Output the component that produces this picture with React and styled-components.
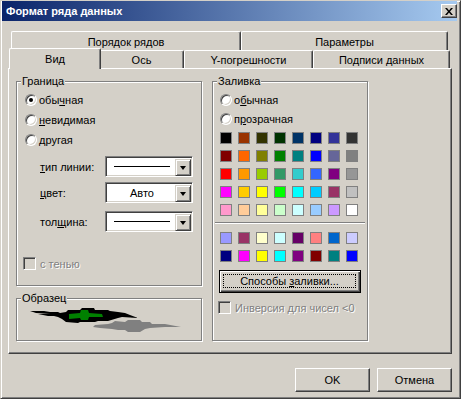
import React from "react";
import styled, { createGlobalStyle } from "styled-components";

const GlobalStyle = createGlobalStyle`
  html, body {
    margin: 0;
    padding: 0;
    background: #d4d0c8;
  }
  body {
    font-family: "Liberation Sans", Arial, sans-serif;
    font-size: 11px;
    color: #000;
  }
`;

const basePalette = [
  ["#000000", "#993300", "#333300", "#003300", "#003366", "#000080", "#333399", "#333333"],
  ["#800000", "#ff6600", "#808000", "#008000", "#008080", "#0000ff", "#666699", "#808080"],
  ["#ff0000", "#ff9900", "#99cc00", "#339966", "#33cccc", "#3366ff", "#800080", "#969696"],
  ["#ff00ff", "#ffcc00", "#ffff00", "#00ff00", "#00ffff", "#00ccff", "#993366", "#c0c0c0"],
  ["#ff99cc", "#ffcc99", "#ffff99", "#ccffcc", "#ccffff", "#99ccff", "#cc99ff", "#ffffff"],
];

const chartPalette = [
  ["#9999ff", "#993366", "#ffffcc", "#ccffff", "#660066", "#ff8080", "#0066cc", "#ccccff"],
  ["#000080", "#ff00ff", "#ffff00", "#00ffff", "#800080", "#800000", "#008080", "#0000ff"],
];

const Window = styled.div`
  width: 461px;
  height: 399px;
  box-sizing: border-box;
  background: #d4d0c8;
  border: 1px solid;
  border-color: #d4d0c8 #404040 #404040 #d4d0c8;
  box-shadow: inset 1px 1px #fff, inset -1px -1px #808080;
  padding: 0 3px 1px 1px;
`;

const TitleBar = styled.div`
  height: 20px;
  display: flex;
  align-items: center;
  justify-content: space-between;
  padding-left: 4px;
  background: linear-gradient(to right, #0a246a, #a6caf0);
  color: #fff;
  font-weight: bold;
  font-size: 11px;
`;

const CloseButton = styled.div`
  width: 16px;
  height: 14px;
  box-sizing: border-box;
  background: #d4d0c8;
  border: 1px solid;
  border-color: #fff #404040 #404040 #fff;
  box-shadow: inset -1px -1px #808080;
  display: flex;
  align-items: center;
  justify-content: center;
`;

const Body = styled.div`
  padding: 10px 5px 0 6px;
`;

const TabStrip = styled.div`
  height: 37px;
  display: flex;
  flex-direction: column;
`;

const TabRow = styled.div`
  height: ${(p) => p.$h}px;
  display: flex;
  padding-left: 3px;
  align-items: flex-end;
`;

const Tab = styled.div`
  box-sizing: border-box;
  width: ${(p) => (p.$active ? p.$w + 4 : p.$w)}px;
  height: ${(p) => (p.$active ? 21 : p.$h)}px;
  margin: ${(p) => (p.$active ? "0 -2px -1px -2px" : "0")};
  position: relative;
  z-index: ${(p) => (p.$active ? 2 : 0)};
  align-self: flex-start;
  display: flex;
  align-items: center;
  justify-content: center;
  padding-top: ${(p) => (p.$active ? 0 : 1)}px;
  background: #d4d0c8;
  border-top: 1px solid #fff;
  border-left: 1px solid #fff;
  border-right: 1px solid #404040;
  box-shadow: inset -1px 0 #808080;
  border-radius: 2px 2px 0 0;
  margin-top: ${(p) => (p.$active ? 0 : p.$top)}px;
`;

const Panel = styled.div`
  box-sizing: border-box;
  width: 444px;
  height: 286px;
  border: 1px solid;
  border-color: #fff #404040 #404040 #fff;
  box-shadow: inset -1px -1px #808080;
  padding: 12px 0 0 7px;
  display: flex;
  gap: 10px;
`;

const Column = styled.div`
  display: flex;
  flex-direction: column;
  gap: 12px;
`;

const Group = styled.div`
  position: relative;
  box-sizing: border-box;
  width: ${(p) => p.$w}px;
  height: ${(p) => p.$h}px;
  border: 1px solid #808080;
  box-shadow: inset 1px 1px #fff, 1px 1px #fff;
  padding: ${(p) => p.$pad || "8px 0 0 8px"};
`;

const Legend = styled.span`
  position: absolute;
  top: -7px;
  left: 4px;
  padding: 0 1px;
  line-height: 13px;
  background: #d4d0c8;
`;

const OptionRow = styled.div`
  height: ${(p) => p.$h || 20}px;
  display: flex;
  align-items: center;
`;

const Radio = styled.span`
  box-sizing: border-box;
  width: 12px;
  height: 12px;
  border-radius: 50%;
  border: 1px solid;
  border-color: #808080 #fff #fff #808080;
  box-shadow: inset 1px 1px #404040, inset -1px -1px #d4d0c8;
  background: #fff;
  margin-right: 2px;
  display: flex;
  align-items: center;
  justify-content: center;

  &::after {
    content: "";
    width: 4px;
    height: 4px;
    border-radius: 50%;
    background: ${(p) => (p.$checked ? "#000" : "transparent")};
  }
`;

const CheckRow = styled.div`
  display: flex;
  align-items: center;
  height: 13px;
  margin: ${(p) => p.$m};
  color: #808080;
  text-shadow: 1px 1px 0 #fff;
`;

const CheckBox = styled.span`
  box-sizing: border-box;
  width: 13px;
  height: 13px;
  border: 1px solid;
  border-color: #808080 #fff #fff #808080;
  box-shadow: inset 1px 1px #404040, inset -1px -1px #d4d0c8;
  background: #d4d0c8;
  margin-right: 4px;
`;

const FieldRow = styled.div`
  display: flex;
  align-items: center;
  height: 21px;
  margin-top: ${(p) => p.$mt}px;
  padding-left: 15px;
`;

const FieldLabel = styled.span`
  width: 65px;
`;

const Combo = styled.div`
  box-sizing: border-box;
  width: 88px;
  height: 21px;
  border: 1px solid;
  border-color: #808080 #fff #fff #808080;
  box-shadow: inset 1px 1px #404040, inset -1px -1px #d4d0c8;
  background: #fff;
  padding: 2px;
  display: flex;
`;

const ComboValue = styled.div`
  flex: 1;
  display: flex;
  align-items: center;
  justify-content: center;
  padding: 0 5px 0 6px;
`;

const LineSample = styled.div`
  flex: 1;
  height: 1px;
  background: #000;
`;

const ArrowButton = styled.div`
  box-sizing: border-box;
  width: 16px;
  height: 17px;
  margin-right: -1px;
  background: #d4d0c8;
  border: 1px solid;
  border-color: #d4d0c8 #404040 #404040 #d4d0c8;
  box-shadow: inset 1px 1px #fff, inset -1px -1px #808080;
  display: flex;
  align-items: center;
  justify-content: center;

  &::after {
    content: "";
    border-left: 3.5px solid transparent;
    border-right: 3.5px solid transparent;
    border-top: 4px solid #000;
    margin-top: 1px;
  }
`;

const SampleArt = styled.svg`
  display: block;
  position: absolute;
  left: 0;
  top: 0;
`;

const Swatches = styled.div`
  display: grid;
  grid-template-columns: repeat(8, 12px);
  gap: 6px;
  margin-top: ${(p) => p.$mt}px;
`;

const Swatch = styled.span`
  box-sizing: border-box;
  width: 12px;
  height: 12px;
  border: 1px solid #808080;
  background: ${(p) => p.$c};
`;

const Separator = styled.div`
  height: 0;
  border-top: 1px solid #808080;
  border-bottom: 1px solid #fff;
  margin: 6px -5px 8px -5px;
`;

const DefaultButton = styled.div`
  box-sizing: border-box;
  width: 142px;
  height: 23px;
  margin: 8px 0 0 -1px;
  border: 1px solid #000;
  box-shadow: inset 1px 1px #fff, inset -1px -1px #404040, inset -2px -2px #808080;
  padding: 3px 4px 4px 3px;
  display: flex;
`;

const FocusRect = styled.span`
  flex: 1;
  border: 1px dotted #000;
  display: flex;
  align-items: center;
  justify-content: center;
`;

const ButtonRow = styled.div`
  display: flex;
  justify-content: flex-end;
  gap: 7px;
  margin-top: 14px;
`;

const Button = styled.div`
  box-sizing: border-box;
  width: 75px;
  height: 24px;
  border: 1px solid;
  border-color: #fff #404040 #404040 #fff;
  box-shadow: inset -1px -1px #808080;
  display: flex;
  align-items: center;
  justify-content: center;
`;

const frontTabs = [
  { label: "Вид", w: 88, active: true },
  { label: "Ось", w: 85 },
  { label: "Y-погрешности", w: 129 },
  { label: "Подписи данных", w: 137 },
];

const backTabs = [
  { label: "Порядок рядов", w: 230 },
  { label: "Параметры", w: 207 },
];

function SwatchGrid({ rows, mt }) {
  return (
    <Swatches $mt={mt}>
      {rows.flat().map((c, i) => (
        <Swatch key={i} $c={c} />
      ))}
    </Swatches>
  );
}

export default function App() {
  return (
    <>
      <GlobalStyle />
      <Window>
        <TitleBar>
          <span>Формат ряда данных</span>
          <CloseButton>
            <svg width="8" height="7" viewBox="0 0 8 7">
              <path d="M0 0h2l2 2.5L6 0h2L5 3.5 8 7H6L4 4.5 2 7H0l3-3.5z" fill="#000" />
            </svg>
          </CloseButton>
        </TitleBar>
        <Body>
          <TabStrip>
            <TabRow $h={17}>
              {backTabs.map((t) => (
                <Tab key={t.label} $w={t.w} $h={19} $top={0}>
                  {t.label}
                </Tab>
              ))}
            </TabRow>
            <TabRow $h={20}>
              {frontTabs.map((t) => (
                <Tab key={t.label} $w={t.w} $h={18} $top={2} $active={t.active}>
                  {t.label}
                </Tab>
              ))}
            </TabRow>
          </TabStrip>
          <Panel>
            <Column>
              <Group $w={186} $h={205}>
                <Legend>Граница</Legend>
                <OptionRow>
                  <Radio $checked />
                  <span>
                    обы<u>ч</u>ная
                  </span>
                </OptionRow>
                <OptionRow>
                  <Radio />
                  <span>
                    <u>н</u>евидимая
                  </span>
                </OptionRow>
                <OptionRow>
                  <Radio />
                  <span>другая</span>
                </OptionRow>
                <FieldRow $mt={6}>
                  <FieldLabel>
                    <u>т</u>ип линии:
                  </FieldLabel>
                  <Combo>
                    <ComboValue>
                      <LineSample />
                    </ComboValue>
                    <ArrowButton />
                  </Combo>
                </FieldRow>
                <FieldRow $mt={5}>
                  <FieldLabel>
                    <u>ц</u>вет:
                  </FieldLabel>
                  <Combo>
                    <ComboValue>Авто</ComboValue>
                    <ArrowButton />
                  </Combo>
                </FieldRow>
                <FieldRow $mt={8}>
                  <FieldLabel>
                    тол<u>щ</u>ина:
                  </FieldLabel>
                  <Combo>
                    <ComboValue>
                      <LineSample />
                    </ComboValue>
                    <ArrowButton />
                  </Combo>
                </FieldRow>
                <CheckRow $m="25px 0 0 -2px">
                  <CheckBox />
                  <span>с тенью</span>
                </CheckRow>
              </Group>
              <Group $w={186} $h={43} $pad="0">
                <Legend>Образец</Legend>
                <SampleArt width="184" height="41" viewBox="17 299 184 41">
                  <polygon
                    fill="#808080"
                    points="95,325 108,324 112,323 115,321 125,322 128,320 140,320 142,322 150,322 152,324 165,324 181,327 165,327 150,328 145,329 140,332 128,332 125,330 118,330 112,329 100,328 93,327"
                  />
                  <polygon
                    fill="#000"
                    points="30,311 44,311 50,312 58,312 60,313 66,312 68,310 80,310 82,308 94,308 95,310 108,310 110,311 118,312 125,313 130,315 138,318 122,317 118,318 108,321 98,321 95,322 80,322 78,323 66,322 62,319 58,317 54,316 48,316 38,314 50,314 36,313"
                  />
                  <polygon
                    fill="#008000"
                    points="69,314 80,313 81,310 88,310 89,313 102,314 103,317 89,317 88,320 81,320 80,318 69,319"
                  />
                </SampleArt>
              </Group>
            </Column>
            <Group $w={156} $h={260} $pad="8px 7px 0 7px">
              <Legend>Заливка</Legend>
              <OptionRow $h={19}>
                <Radio />
                <span>
                  о<u>б</u>ычная
                </span>
              </OptionRow>
              <OptionRow $h={19}>
                <Radio />
                <span>
                  п<u>р</u>озрачная
                </span>
              </OptionRow>
              <SwatchGrid rows={basePalette} mt={4} />
              <Separator />
              <SwatchGrid rows={chartPalette} mt={0} />
              <DefaultButton>
                <FocusRect>
                  <span>
                    Способы <u>з</u>аливки...
                  </span>
                </FocusRect>
              </DefaultButton>
              <CheckRow $m="8px 0 0 -2px">
                <CheckBox />
                <span>Инверсия для чисел &lt;0</span>
              </CheckRow>
            </Group>
          </Panel>
          <ButtonRow>
            <Button>OK</Button>
            <Button>Отмена</Button>
          </ButtonRow>
        </Body>
      </Window>
    </>
  );
}
